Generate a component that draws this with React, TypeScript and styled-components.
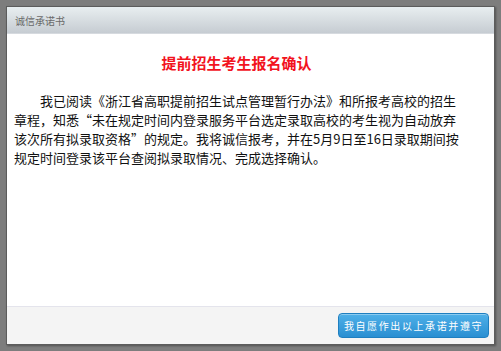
import React from "react";
import styled, { createGlobalStyle } from "styled-components";

const Global = createGlobalStyle`
  html, body { margin: 0; padding: 0; }
  body {
    background: #7d7d7d;
    width: 501px;
    height: 351px;
    overflow: hidden;
    font-family: "Noto Sans CJK SC", "Noto Sans", sans-serif;
  }
`;

const Stage = styled.div`
  box-sizing: border-box;
  width: 501px;
  height: 351px;
  padding: 6px;
`;

const Dialog = styled.div`
  box-sizing: border-box;
  width: 489px;
  height: 339px;
  display: flex;
  flex-direction: column;
  background: #fff;
  border: 1px solid #5c5c5c;
  box-shadow: 1px 1px 2px rgba(0, 0, 0, 0.35);
`;

const TitleBar = styled.div`
  height: 26px;
  flex: none;
  display: flex;
  align-items: center;
  padding-left: 8px;
  background: linear-gradient(#e8eef0, #c6ccd2);
  border-bottom: 1px solid #d6dadf;
  color: #6a6a6a;
  font-size: 10px;
`;

const Body = styled.div`
  flex: 1;
  padding: 18px 0 0 7px;
`;

const Content = styled.div`
  width: 445px;
`;

const Heading = styled.h1`
  margin: 0 0 17px 0;
  text-align: center;
  color: #f2131e;
  font-size: 15px;
  font-weight: bold;
  line-height: 22px;
`;

const Para = styled.p`
  margin: 0;
  font-size: 13px;
  line-height: 19px;
  color: #111;
  text-indent: 2em;
`;

const Footer = styled.div`
  height: 37px;
  flex: none;
  display: flex;
  align-items: center;
  justify-content: flex-end;
  padding-right: 5px;
  background: #f4f4f4;
  border-top: 1px solid #e4e4ec;
`;

const Button = styled.button`
  height: 25px;
  width: 151px;
  padding: 0;
  border: 1px solid #1f7fc0;
  border-radius: 4px;
  background: linear-gradient(#4fb0e8, #2a8fd2);
  color: #fff;
  font-family: "Noto Sans CJK SC", sans-serif;
  font-size: 10px;
  letter-spacing: 1.6px;
  box-shadow: inset 0 1px 0 rgba(255, 255, 255, 0.35);
`;

export default function App() {
  return (
    <Stage>
      <Global />
      <Dialog>
        <TitleBar>诚信承诺书</TitleBar>
        <Body>
          <Content>
            <Heading>提前招生考生报名确认</Heading>
            <Para>
              我已阅读《浙江省高职提前招生试点管理暂行办法》和所报考高校的招生章程，知悉“未在规定时间内登录服务平台选定录取高校的考生视为自动放弃该次所有拟录取资格”的规定。我将诚信报考，并在5月9日至16日录取期间按规定时间登录该平台查阅拟录取情况、完成选择确认。
            </Para>
          </Content>
        </Body>
        <Footer>
          <Button>我自愿作出以上承诺并遵守</Button>
        </Footer>
      </Dialog>
    </Stage>
  );
}
